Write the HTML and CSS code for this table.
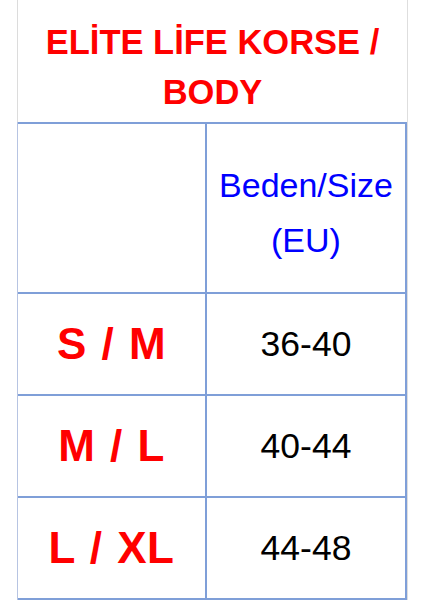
FILE: index.html
```html
<!DOCTYPE html>
<html lang="tr">
<head>
<meta charset="utf-8">
<title>Elite Life Korse / Body</title>
<link rel="stylesheet" href="styles.css">
</head>
<body>
<div class="sheet">
  <div class="header">
    <h1 class="title">ELİTE LİFE KORSE /<br>BODY</h1>
  </div>
  <div class="grid">
    <div class="cell"></div>
    <div class="cell head">Beden/Size<br>(EU)</div>
    <div class="cell size">S / M</div>
    <div class="cell num">36-40</div>
    <div class="cell size">M / L</div>
    <div class="cell num">40-44</div>
    <div class="cell size">L / XL</div>
    <div class="cell num">44-48</div>
  </div>
</div>
</body>
</html>
```
FILE: styles.css
```css
html, body {
  margin: 0;
  padding: 0;
  background: #ffffff;
}
body {
  font-family: "Liberation Sans", Arial, sans-serif;
  height: 600px;
  overflow: hidden;
}
.sheet {
  margin-left: 17px;
  width: 390px;
  border-right: 1px solid #dedede;
  height: 600px;
}
.header {
  height: 122px;
  box-sizing: border-box;
  border-left: 1px solid #dcdcdc;
  padding-top: 17px;
  text-align: center;
}
.title {
  margin: 0;
  font-size: 34.5px;
  line-height: 50px;
  font-weight: bold;
  color: #ff0000;
}
.grid {
  display: grid;
  grid-template-columns: 187px 198px;
  grid-template-rows: 168px 100px 100px 100px;
  gap: 2px;
  padding: 2px 2px 2px 0;
  border-left: 1px solid #b7c4e2;
  background: #7f9fd8;
}
.cell {
  background: #ffffff;
  display: flex;
  align-items: center;
  justify-content: center;
  text-align: center;
}
.head {
  color: #0000ff;
  font-size: 34px;
  line-height: 55px;
  padding-top: 10px;
  box-sizing: border-box;
}
.size {
  color: #ff0000;
  font-weight: bold;
  font-size: 44px;
  word-spacing: 2px;
  letter-spacing: 0.5px;
}
.num {
  color: #000000;
  font-size: 35.5px;
}
```
